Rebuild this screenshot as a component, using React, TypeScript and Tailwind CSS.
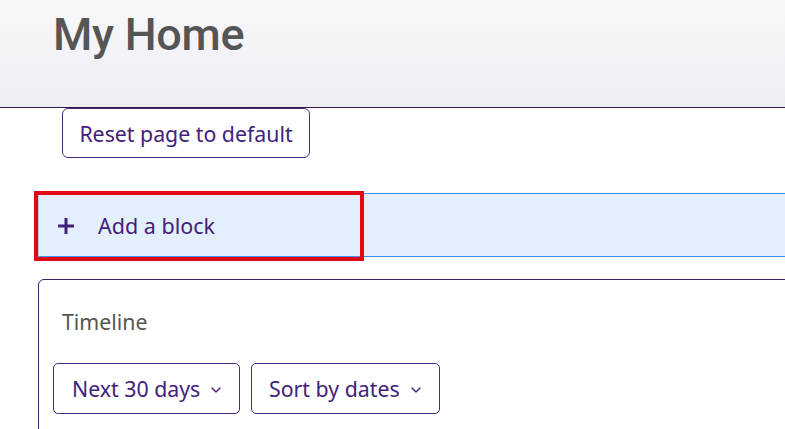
import React from "react";

function Chevron() {
  return (
    <svg width="10" height="6" viewBox="0 0 10 6" className="ml-[11px] mt-[3px]" fill="none">
      <path d="M1 1 L5 5 L9 1" stroke="#42217a" strokeWidth="1.4" strokeLinecap="round" strokeLinejoin="round" />
    </svg>
  );
}

export default function App() {
  const body = { fontFamily: '"Noto Sans", "Open Sans", sans-serif' };
  return (
    <div className="w-[785px] h-[429px] overflow-hidden bg-white" style={body}>
      <header className="h-[108px] border-b border-[#2d1a4a] bg-gradient-to-b from-[#f8f7fa] to-[#efedf4] pl-[53px] pt-[12px]">
        <h1
          className="text-[45px] leading-none font-medium text-[#555555] tracking-[-0.3px]"
          style={{ fontFamily: 'Roboto, "Liberation Sans", sans-serif' }}
        >
          My Home
        </h1>
      </header>

      <div className="pl-[62px]">
        <button className="h-[50px] w-[248px] rounded-[6px] border border-[#4b2a7e] bg-white text-[21.3px] text-[#42217a] flex items-center justify-center pt-[1px]">
          Reset page to default
        </button>
      </div>

      <div className="mt-[35px] ml-[38px] h-[64px] border-y border-[#3d8ef5] border-l border-l-[#a9cdf7] bg-[#e3effd] flex">
        <a className="-ml-[1px] mt-[1px] w-[322px] h-[62px] flex items-center pl-[19px] outline-[4px] outline-solid outline-[#e30613] text-[21.5px] text-[#42217a]">
          <svg width="18" height="18" viewBox="0 0 18 18" className="mr-[23px]">
            <path d="M9 1 V17 M1 9 H17" stroke="#42217a" strokeWidth="3" />
          </svg>
          Add a block
        </a>
      </div>

      <section className="mt-[22px] ml-[38px] w-[900px] h-[200px] rounded-tl-[6px] rounded-tr-[6px] border border-[#3d2266] pl-[14px] pt-[28px]">
        <h2 className="pl-[9px] text-[21.3px] leading-[28px] text-[#555555]">Timeline</h2>
        <div className="mt-[27px] flex gap-[11px]">
          <button className="h-[51px] w-[187px] rounded-[5px] border border-[#4b2a7e] bg-white pl-[18px] flex items-center text-[21.3px] text-[#42217a]">
            Next 30 days
            <Chevron />
          </button>
          <button className="h-[51px] w-[189px] rounded-[5px] border border-[#4b2a7e] bg-white pl-[17px] flex items-center text-[21.3px] text-[#42217a]">
            Sort by dates
            <Chevron />
          </button>
        </div>
      </section>
    </div>
  );
}
